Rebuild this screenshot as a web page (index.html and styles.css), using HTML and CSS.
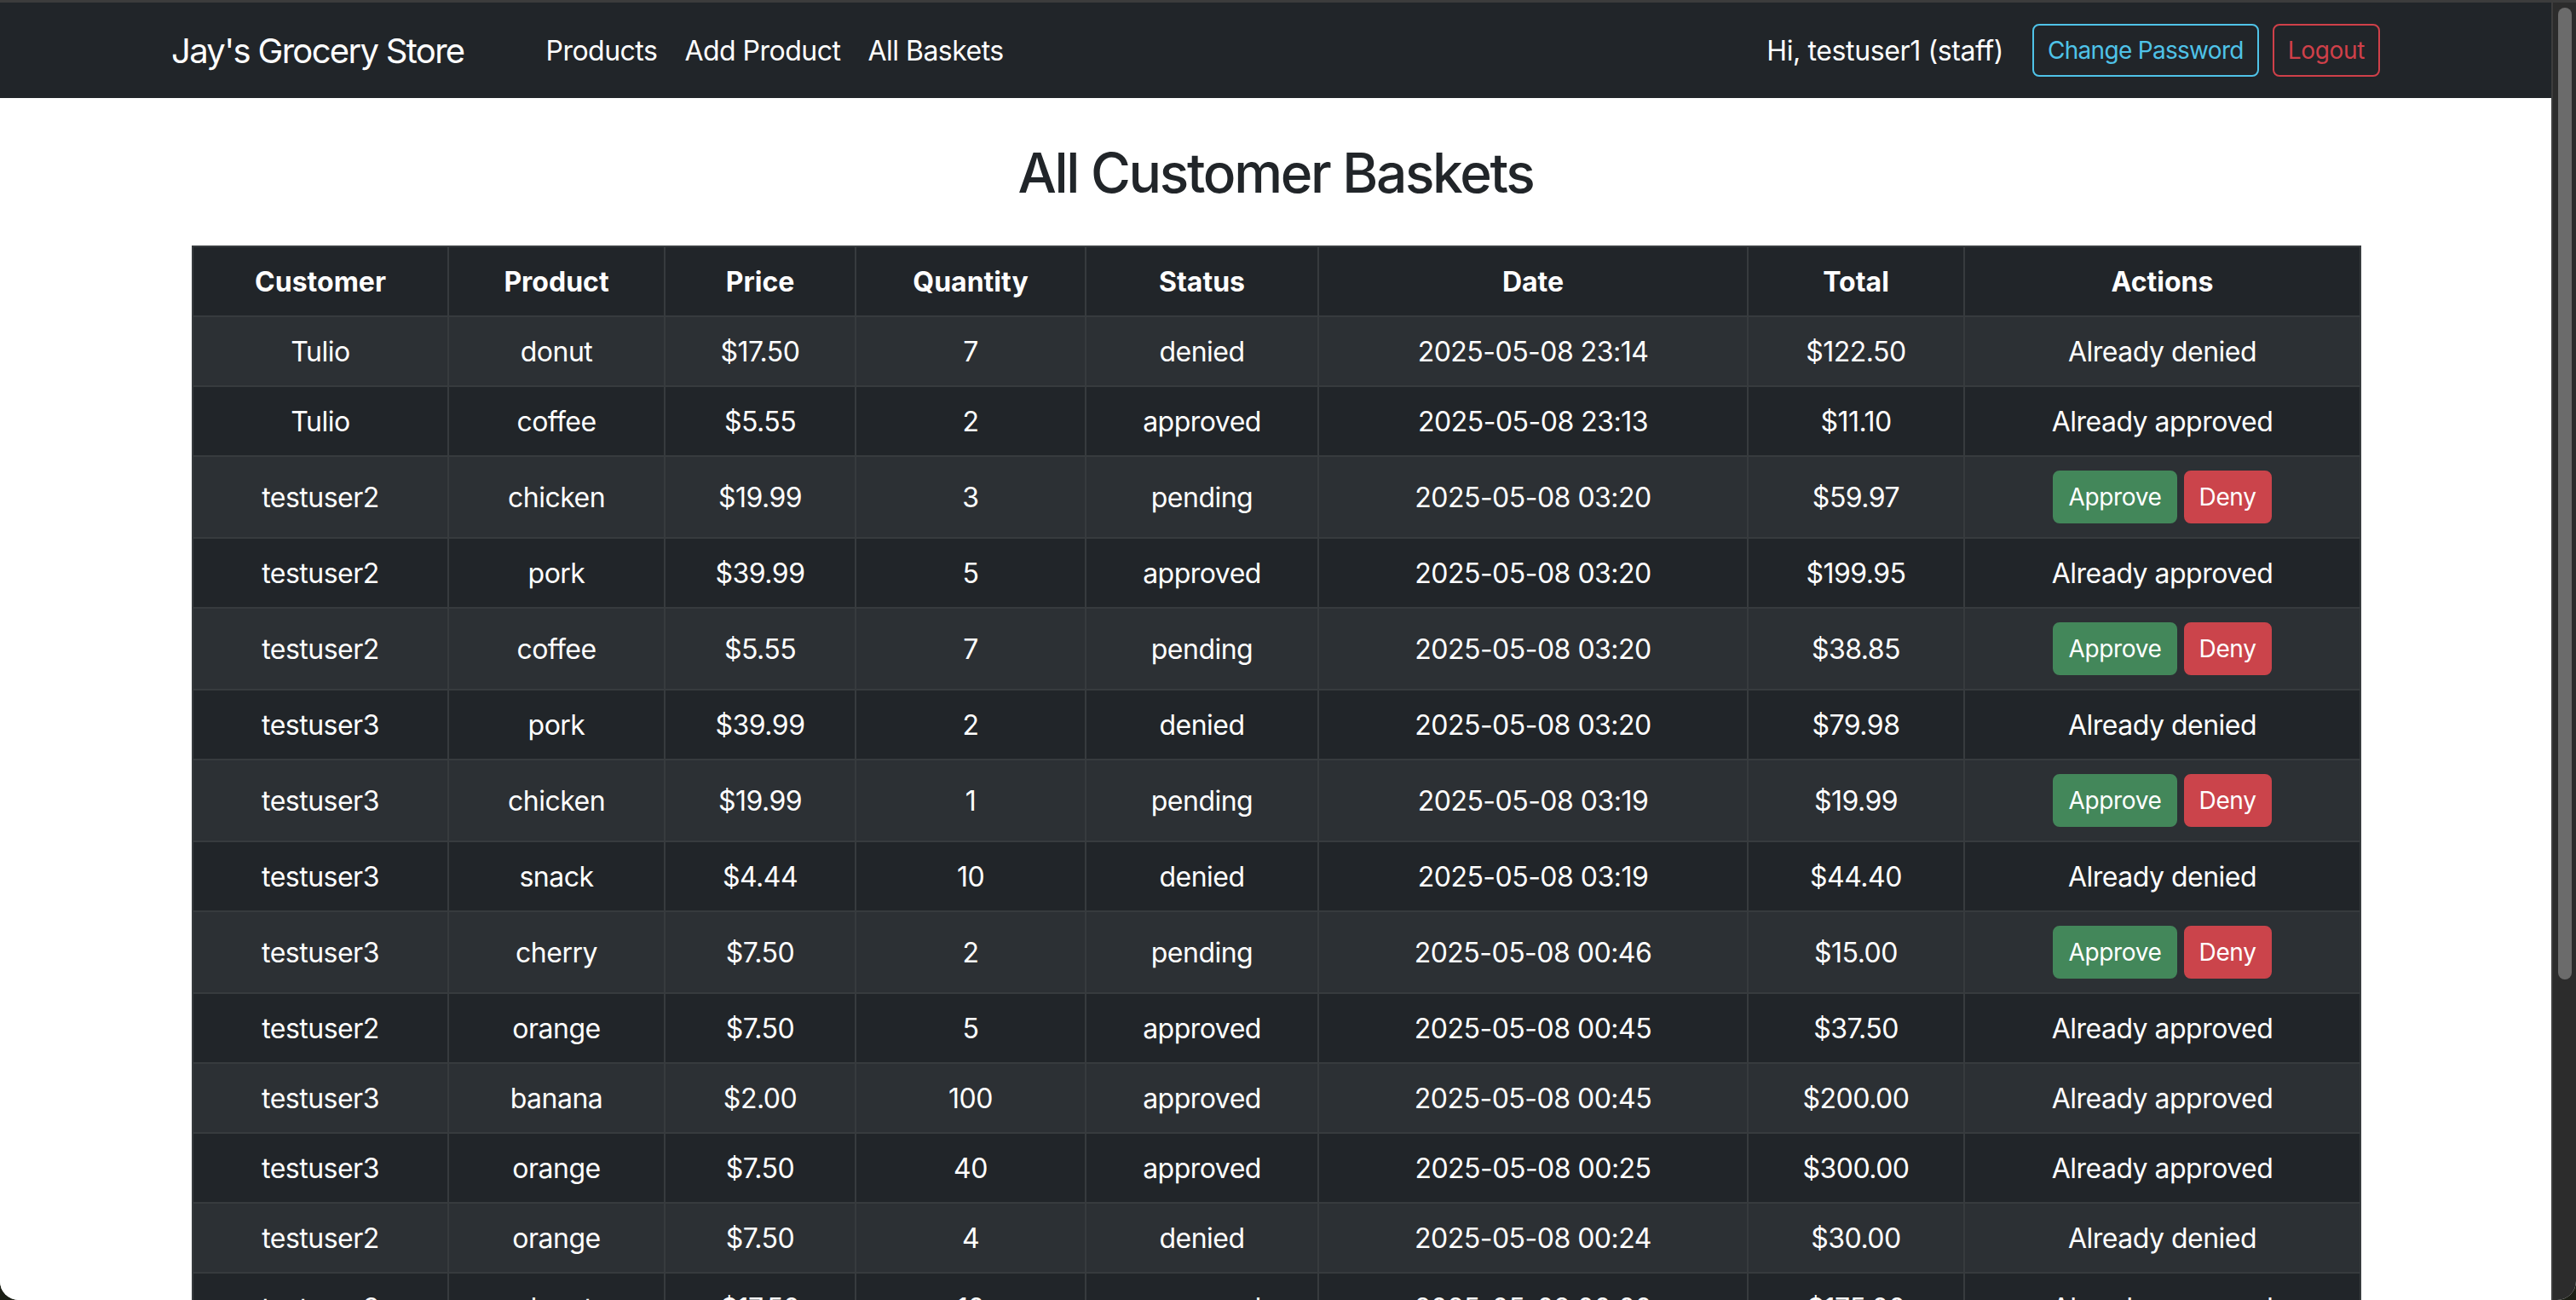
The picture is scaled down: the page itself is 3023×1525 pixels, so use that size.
FILE: index.html
```html
<!DOCTYPE html>
<html lang="en">
<head>
<meta charset="utf-8">
<title>All Customer Baskets</title>
<link rel="stylesheet" href="styles.css">
</head>
<body>
<div class="window">
  <div class="page">
    <nav class="navbar">
      <div class="nav-container">
        <a class="brand" href="#">Jay's Grocery Store</a>
        <ul class="nav-links">
          <li><a href="#">Products</a></li>
          <li><a href="#">Add Product</a></li>
          <li><a href="#">All Baskets</a></li>
        </ul>
        <div class="nav-right">
          <span class="greeting">Hi, testuser1 (staff)</span>
          <a class="btn btn-outline-info" href="#">Change Password</a>
          <a class="btn btn-outline-danger" href="#">Logout</a>
        </div>
      </div>
    </nav>
    <main class="container">
      <h2 class="title">All Customer Baskets</h2>
      <table class="baskets">
        <colgroup>
          <col class="c-customer"><col class="c-product"><col class="c-price"><col class="c-qty">
          <col class="c-status"><col class="c-date"><col class="c-total"><col class="c-actions">
        </colgroup>
        <thead>
          <tr><th>Customer</th><th>Product</th><th>Price</th><th>Quantity</th><th>Status</th><th>Date</th><th>Total</th><th>Actions</th></tr>
        </thead>
        <tbody>
          <tr><td>Tulio</td><td>donut</td><td>$17.50</td><td>7</td><td>denied</td><td>2025-05-08 23:14</td><td>$122.50</td><td>Already denied</td></tr>
          <tr><td>Tulio</td><td>coffee</td><td>$5.55</td><td>2</td><td>approved</td><td>2025-05-08 23:13</td><td>$11.10</td><td>Already approved</td></tr>
          <tr><td>testuser2</td><td>chicken</td><td>$19.99</td><td>3</td><td>pending</td><td>2025-05-08 03:20</td><td>$59.97</td><td><span class="actions"><a class="btn btn-success" href="#">Approve</a><a class="btn btn-danger" href="#">Deny</a></span></td></tr>
          <tr><td>testuser2</td><td>pork</td><td>$39.99</td><td>5</td><td>approved</td><td>2025-05-08 03:20</td><td>$199.95</td><td>Already approved</td></tr>
          <tr><td>testuser2</td><td>coffee</td><td>$5.55</td><td>7</td><td>pending</td><td>2025-05-08 03:20</td><td>$38.85</td><td><span class="actions"><a class="btn btn-success" href="#">Approve</a><a class="btn btn-danger" href="#">Deny</a></span></td></tr>
          <tr><td>testuser3</td><td>pork</td><td>$39.99</td><td>2</td><td>denied</td><td>2025-05-08 03:20</td><td>$79.98</td><td>Already denied</td></tr>
          <tr><td>testuser3</td><td>chicken</td><td>$19.99</td><td>1</td><td>pending</td><td>2025-05-08 03:19</td><td>$19.99</td><td><span class="actions"><a class="btn btn-success" href="#">Approve</a><a class="btn btn-danger" href="#">Deny</a></span></td></tr>
          <tr><td>testuser3</td><td>snack</td><td>$4.44</td><td>10</td><td>denied</td><td>2025-05-08 03:19</td><td>$44.40</td><td>Already denied</td></tr>
          <tr><td>testuser3</td><td>cherry</td><td>$7.50</td><td>2</td><td>pending</td><td>2025-05-08 00:46</td><td>$15.00</td><td><span class="actions"><a class="btn btn-success" href="#">Approve</a><a class="btn btn-danger" href="#">Deny</a></span></td></tr>
          <tr><td>testuser2</td><td>orange</td><td>$7.50</td><td>5</td><td>approved</td><td>2025-05-08 00:45</td><td>$37.50</td><td>Already approved</td></tr>
          <tr><td>testuser3</td><td>banana</td><td>$2.00</td><td>100</td><td>approved</td><td>2025-05-08 00:45</td><td>$200.00</td><td>Already approved</td></tr>
          <tr><td>testuser3</td><td>orange</td><td>$7.50</td><td>40</td><td>approved</td><td>2025-05-08 00:25</td><td>$300.00</td><td>Already approved</td></tr>
          <tr><td>testuser2</td><td>orange</td><td>$7.50</td><td>4</td><td>denied</td><td>2025-05-08 00:24</td><td>$30.00</td><td>Already denied</td></tr>
          <tr><td>testuser3</td><td>donut</td><td>$17.50</td><td>10</td><td>approved</td><td>2025-05-08 00:00</td><td>$175.00</td><td>Already approved</td></tr>
        </tbody>
      </table>
    </main>
  </div>
  <div class="scrollbar"><div class="thumb"></div></div>
</div>
</body>
</html>
```

FILE: styles.css
```css
* { box-sizing: border-box; }

html, body {
  margin: 0;
  padding: 0;
  height: 100%;
  overflow: hidden;
}

body {
  background: #1c1f16;
  font-family: Inter, "Liberation Sans", "DejaVu Sans", sans-serif;
  color: #212529;
}

.window {
  display: flex;
  height: 100%;
  border-top: 3px solid #3c3c3c;
  border-radius: 0 0 22px 22px;
  overflow: hidden;
  background: #ffffff;
}

.page {
  flex: 1;
  min-width: 0;
  overflow: hidden;
  background: #ffffff;
}

/* fake macOS scrollbar */
.scrollbar {
  width: 29px;
  flex: none;
  background: #2c2c2c;
  border-left: 2px solid #3d3d3d;
  padding: 6px 0 0 6px;
}
.thumb {
  width: 16px;
  height: 1140px;
  border-radius: 8px;
  background: #6b6b6b;
}

/* navbar */
.navbar {
  background: #212529;
  height: 112px;
}
.nav-container {
  max-width: 2640px;
  height: 100%;
  margin: 0 auto;
  padding: 2px 24px 0;
  display: flex;
  align-items: center;
}
.brand {
  color: #ffffff;
  text-decoration: none;
  font-size: 40px;
  line-height: 60px;
  letter-spacing: -0.042em;
  margin-right: 32px;
}
.nav-links {
  list-style: none;
  margin: 0 0 0 48px;
  padding: 0;
  display: flex;
}
.nav-links a {
  display: block;
  color: #ffffff;
  text-decoration: none;
  font-size: 32px;
  line-height: 48px;
  letter-spacing: -0.016em;
  padding: 16px;
}
.nav-right {
  margin-left: auto;
  display: flex;
  align-items: center;
}
.greeting {
  color: #ffffff;
  font-size: 32px;
  line-height: 48px;
  letter-spacing: -0.012em;
  margin-right: 34px;
}

/* buttons */
.btn {
  display: inline-block;
  font-size: 28px;
  line-height: 42px;
  padding: 8px 16px;
  border: 2px solid transparent;
  border-radius: 8px;
  text-decoration: none;
  text-align: center;
  vertical-align: middle;
  letter-spacing: -0.012em;
}
.nav-right .btn {
  margin-top: -2px;
}
.btn-outline-info {
  color: #4fc3e8;
  border-color: #4fc3e8;
  margin-right: 16px;
  letter-spacing: -0.025em;
}
.btn-outline-danger {
  color: #cf4049;
  border-color: #cf4049;
}
.btn-success {
  color: #ffffff;
  background: #43875a;
  border-color: #43875a;
  margin-right: 8px;
}
.btn-danger {
  color: #ffffff;
  background: #cb444b;
  border-color: #cb444b;
}

/* content */
.container {
  max-width: 2640px;
  margin: 50px auto 0;
  padding: 0 48px;
}
.title {
  margin: 0 0 46px;
  text-align: center;
  font-size: 64px;
  font-weight: 500;
  line-height: 1.2;
  letter-spacing: -0.036em;
  color: #212529;
}

.baskets {
  width: 100%;
  table-layout: fixed;
  border-collapse: collapse;
  background: #212529;
  color: #ffffff;
  font-size: 32px;
  line-height: 48px;
}
.c-customer { width: 300px; }
.c-product { width: 254px; }
.c-price { width: 224px; }
.c-qty { width: 270px; }
.c-status { width: 273px; }
.c-date { width: 504px; }
.c-total { width: 254px; }
.c-actions { width: 465px; }

.baskets th,
.baskets td {
  padding: 17px 16px 15px;
  border: 2px solid #373b3e;
  text-align: center;
  vertical-align: middle;
  white-space: nowrap;
}
.baskets td {
  letter-spacing: -0.016em;
}
.baskets th {
  font-weight: 700;
}
.baskets tbody tr:nth-child(odd) td {
  background: #2c3034;
}
.actions {
  display: inline-flex;
  vertical-align: middle;
  margin: -1px 0 1px;
}
```
